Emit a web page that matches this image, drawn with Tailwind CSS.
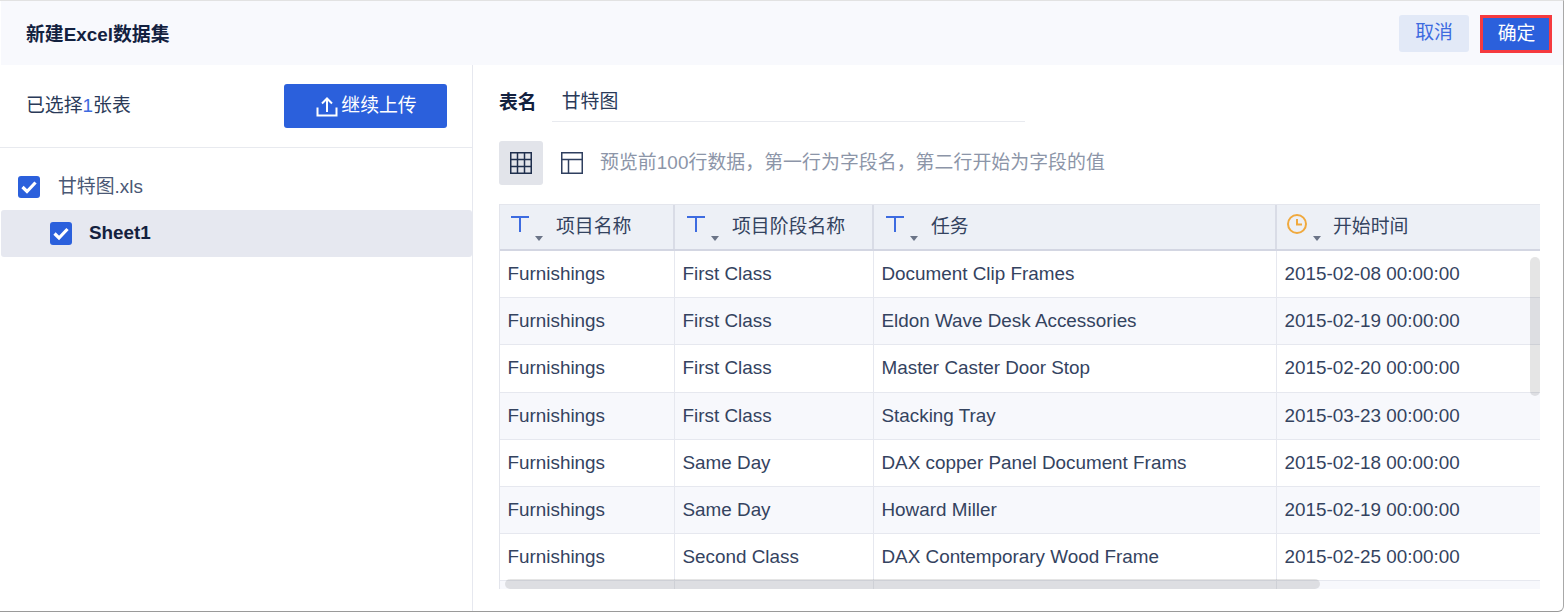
<!DOCTYPE html>
<html lang="zh-CN">
<head>
<meta charset="utf-8">
<script src="https://cdn.jsdelivr.net/npm/@tailwindcss/browser@4"></script>
</head>
<body class="bg-white">
<div class="w-[1564px] h-[612px] overflow-hidden flex flex-col bg-white border-t border-t-[#e2e2e2] border-r border-r-[#a8a8a8] border-b border-b-[#9a9a9a] rounded-br-[6px] text-[18.87px] text-[#1f2f4d] font-['Liberation_Sans','Noto_Sans_CJK_SC',sans-serif]">
  <header class="h-[64px] shrink-0 ml-px bg-[#f8f9fd] flex items-start justify-between pl-[25px] pr-[11px] pt-[14px]">
    <h1 class="font-bold text-[#13213f] text-[18.87px] mt-[6px] leading-[28px]">新建Excel数据集</h1>
    <div class="flex items-start gap-[11px]">
      <button class="w-[70px] h-[37px] rounded-[3px] bg-[#e2e9f7] text-[#3d6be0]">取消</button>
      <button class="w-[72px] h-[38px] bg-[#2b60dc] border-[3px] border-[#f53a3f] text-white pl-[1px]">确定</button>
    </div>
  </header>
  <div class="flex flex-1 min-h-0">
    <aside class="w-[473px] shrink-0 border-r border-[#e6e8ef] flex flex-col">
      <div class="h-[83px] shrink-0 border-b border-[#e8eaef] flex items-center justify-between pl-[26px] pr-[25px]">
        <span class="text-[#2a3a58]">已选择<span class="text-[#3d6be0]">1</span>张表</span>
        <button class="w-[163px] h-[44px] rounded-[3px] bg-[#2b60dc] text-white flex items-center justify-center gap-[3px] pl-[2px]">
          <svg width="22" height="22" viewBox="0 0 22 22" fill="none" stroke="#fff" stroke-width="2"><path d="M11 17V3.500M6 8.500 11 3.500 16 8.500"/><path d="M1.500 12.500v8h19v-8"/></svg>
          <span>继续上传</span>
        </button>
      </div>
      <div class="pt-[15px]">
        <div class="h-[47px] flex items-center pl-[18px] text-[#4a5875]">
          <svg class="mr-[18px] shrink-0" width="22" height="22" viewBox="0 0 22 22"><rect width="22" height="22" rx="3" fill="#2b60dc"/><path d="M4.500 11 9 15.500 17.500 6.500" fill="none" stroke="#fff" stroke-width="3.200"/></svg>
          <span class="mt-[2px]">甘特图.xls</span>
        </div>
        <div class="h-[47px] ml-px flex items-center pl-[49px] bg-[#e6e8f0] rounded-[3px] font-bold text-[#13213f]">
          <svg class="mr-[17px] shrink-0" width="22" height="23" viewBox="0 0 22 23"><rect width="22" height="23" rx="3" fill="#2b60dc"/><path d="M4.500 11.500 9 16 17.500 7" fill="none" stroke="#fff" stroke-width="3.200"/></svg>
          <span>Sheet1</span>
        </div>
      </div>
    </aside>
    <main class="flex-1 min-w-0 pl-[26px] pr-[23px] flex flex-col">
      <div class="h-[57px] shrink-0 flex items-start">
        <span class="font-bold text-[#13213f] mt-[25px] leading-[26px]">表名</span>
        <div class="ml-[15px] w-[473px] h-[57px] border-b border-[#e8eaef] pl-[10px] pt-[23px] leading-[28px] text-[#2a3a58]">甘特图</div>
      </div>
      <div class="mt-[19px] h-[44px] shrink-0 flex items-center">
        <div class="w-[44px] h-[44px] rounded-[3px] bg-[#e2e4ea] flex items-center justify-center">
          <svg width="22" height="22" viewBox="0 0 22 22" fill="none" stroke="#1f2f4d" stroke-width="1.500"><rect x=".75" y=".75" width="20.500" height="20.500"/><path d="M7.500 1v20M14.500 1v20M1 7.500h20M1 14.500h20"/></svg>
        </div>
        <svg class="ml-[18px]" width="22" height="22" viewBox="0 0 22 22" fill="none" stroke="#2f3f5f" stroke-width="1.500"><rect x=".75" y=".75" width="20.500" height="20.500"/><path d="M1 7.500h20M7.500 7.500v14"/></svg>
        <span class="ml-[17px] text-[#8c95a8] tracking-[0.07px]">预览前100行数据，第一行为字段名，第二行开始为字段的值</span>
      </div>
      <div class="relative mt-[19px] h-[385px] overflow-hidden border-l border-[#e3e5ec] text-[#34435f]">
        <div class="grid grid-cols-[175px_199px_403px_263px] h-[47px] bg-[#edf0f6] border-t border-b-2 border-[#e4e6ed] border-b-[#d3d6e2]">
          <div class="flex items-center pl-[9px] border-r-2 border-[#d9dce6]">
            <span class="relative w-[47px] h-full shrink-0"><svg class="absolute left-[2px] top-[11px]" width="18" height="16" viewBox="0 0 18 16" fill="none" stroke="#3d6be0" stroke-width="2"><path d="M0 1h18M9 1v15"/></svg><i class="absolute left-[26px] top-[31px] border-x-[4px] border-x-transparent border-t-[5px] border-t-[#6b7487]"></i></span>项目名称
          </div>
          <div class="flex items-center pl-[10px] border-r-2 border-[#d9dce6]">
            <span class="relative w-[47px] h-full shrink-0"><svg class="absolute left-[2px] top-[11px]" width="18" height="16" viewBox="0 0 18 16" fill="none" stroke="#3d6be0" stroke-width="2"><path d="M0 1h18M9 1v15"/></svg><i class="absolute left-[26px] top-[31px] border-x-[4px] border-x-transparent border-t-[5px] border-t-[#6b7487]"></i></span>项目阶段名称
          </div>
          <div class="flex items-center pl-[10px] border-r-2 border-[#d9dce6]">
            <span class="relative w-[47px] h-full shrink-0"><svg class="absolute left-[2px] top-[11px]" width="18" height="16" viewBox="0 0 18 16" fill="none" stroke="#3d6be0" stroke-width="2"><path d="M0 1h18M9 1v15"/></svg><i class="absolute left-[26px] top-[31px] border-x-[4px] border-x-transparent border-t-[5px] border-t-[#6b7487]"></i></span>任务
          </div>
          <div class="flex items-center pl-[10px]">
            <span class="relative w-[46px] h-full shrink-0"><svg class="absolute left-0 top-[9px]" width="20" height="20" viewBox="0 0 20 20" fill="none" stroke="#f0a93e" stroke-width="2"><circle cx="10" cy="10" r="9"/><path d="M10 5v5.500h5"/></svg><i class="absolute left-[26px] top-[31px] border-x-[4px] border-x-transparent border-t-[5px] border-t-[#6b7487]"></i></span>开始时间
          </div>
        </div>
        <div class="grid grid-cols-[175px_199px_403px_263px] auto-rows-[47.200px] *:flex *:items-center *:pl-[7.500px] *:border-b *:border-r *:border-[#e6e8ef] [&>*:nth-child(8n+5)]:bg-[#f7f8fc] [&>*:nth-child(8n+6)]:bg-[#f7f8fc] [&>*:nth-child(8n+7)]:bg-[#f7f8fc] [&>*:nth-child(8n+8)]:bg-[#f7f8fc] [&>*:nth-child(4n)]:border-r-0">
          <div>Furnishings</div><div>First Class</div><div>Document Clip Frames</div><div>2015-02-08 00:00:00</div>
          <div>Furnishings</div><div>First Class</div><div>Eldon Wave Desk Accessories</div><div>2015-02-19 00:00:00</div>
          <div>Furnishings</div><div>First Class</div><div>Master Caster Door Stop</div><div>2015-02-20 00:00:00</div>
          <div>Furnishings</div><div>First Class</div><div>Stacking Tray</div><div>2015-03-23 00:00:00</div>
          <div>Furnishings</div><div>Same Day</div><div>DAX copper Panel Document Frams</div><div>2015-02-18 00:00:00</div>
          <div>Furnishings</div><div>Same Day</div><div>Howard Miller</div><div>2015-02-19 00:00:00</div>
          <div>Furnishings</div><div>Second Class</div><div>DAX Contemporary Wood Frame</div><div>2015-02-25 00:00:00</div>
          <div></div><div></div><div></div><div></div>
        </div>
        <div class="absolute right-0 top-[53px] w-[10px] h-[139px] rounded-[5px] bg-black/10"></div>
        <div class="absolute left-[5px] bottom-0 w-[815px] h-[10px] rounded-[5px] bg-black/10"></div>
      </div>
    </main>
  </div>
</div>
</body>
</html>
